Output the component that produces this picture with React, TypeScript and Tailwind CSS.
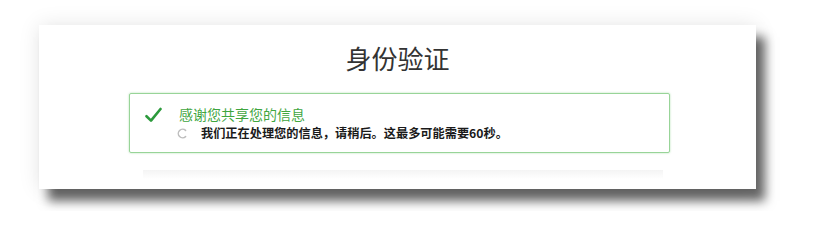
const font = "font-['Noto_Sans_CJK_SC','Noto_Sans',sans-serif]";

const CheckMark = () => (
  <svg width="17" height="16" viewBox="0 0 17 16" className="shrink-0">
    <path
      d="M1.5 9.2 L6 13.6 L15.5 2"
      fill="none"
      stroke="#2c9a3c"
      strokeWidth="2.6"
      strokeLinecap="round"
      strokeLinejoin="round"
    />
  </svg>
);

const Spinner = () => (
  <svg width="11" height="11" viewBox="0 0 11 11" className="shrink-0">
    <path
      d="M8.6 2.4 A4.3 4.3 0 1 0 8.6 8.6"
      fill="none"
      stroke="#bdbdbd"
      strokeWidth="1.5"
      strokeLinecap="round"
    />
  </svg>
);

const App = () => {
  return (
    <div className={`w-[814px] h-[211px] bg-white overflow-hidden pt-[25px] pl-[39px] ${font}`}>
      <div className="w-[717px] h-[164px] bg-white shadow-[9px_12px_10px_rgba(0,0,0,0.6),0_0_20px_rgba(0,0,0,0.1)] pt-[16px]">
        <h1 className="text-center text-[26px] leading-[34px] text-[#333333] font-normal">
          身份验证
        </h1>
        <div className="ml-[90px] mt-[18px] w-[541px] h-[60px] border border-[#98d498] rounded-[2px] shadow-[0_0_2px_rgba(110,195,110,0.6)] pt-[11px] pl-[15px]">
          <div className="flex items-start">
            <div className="pt-[2px]">
              <CheckMark />
            </div>
            <div className="ml-[17px] flex flex-col">
              <p className="text-[14px] leading-[18px] text-[#3fa63f]">感谢您共享您的信息</p>
              <div className="flex items-center mt-[2px] -ml-[2px]">
                <Spinner />
                <p className="ml-[13px] text-[12.2px] leading-[16px] font-semibold text-[#1a1a1a]">
                  我们正在处理您的信息，请稍后。这最多可能需要60秒。
                </p>
              </div>
            </div>
          </div>
        </div>
        <div className="ml-[104px] mt-[17px] w-[520px] h-[9px] bg-gradient-to-b from-[#f4f4f4] to-white" />
      </div>
    </div>
  );
};

export default App;
